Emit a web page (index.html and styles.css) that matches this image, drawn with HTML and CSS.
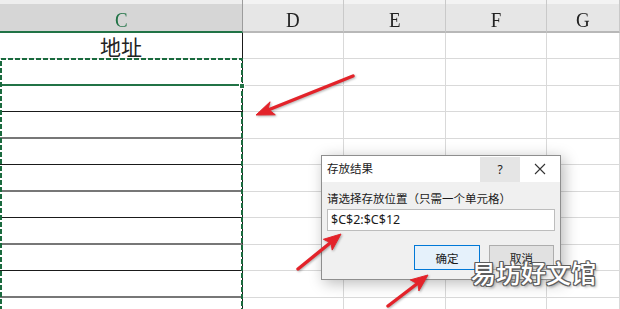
FILE: index.html
```html
<!DOCTYPE html>
<html lang="zh-CN">
<head>
  <meta charset="UTF-8">
  <title>存放结果</title>
  <link rel="stylesheet" href="styles.css">
</head>
<body>
  <div class="page">
    <!-- SHEET -->
    <div class="sheet">
      <div class="hd hd-c"><span>C</span></div>
      <div class="hd"><span>D</span></div>
      <div class="hd"><span>E</span></div>
      <div class="hd"><span>F</span></div>
      <div class="hd"><span>G</span></div>

      <div class="cell c c-title">地址</div><div class="cell"></div><div class="cell"></div><div class="cell"></div><div class="cell"></div>
      <div class="cell c c-active"></div><div class="cell"></div><div class="cell"></div><div class="cell"></div><div class="cell"></div>
      <div class="cell c c-thin"></div><div class="cell"></div><div class="cell"></div><div class="cell"></div><div class="cell"></div>
      <div class="cell c c-thick"></div><div class="cell"></div><div class="cell"></div><div class="cell"></div><div class="cell"></div>
      <div class="cell c c-thin"></div><div class="cell"></div><div class="cell"></div><div class="cell"></div><div class="cell"></div>
      <div class="cell c c-thick"></div><div class="cell"></div><div class="cell"></div><div class="cell"></div><div class="cell"></div>
      <div class="cell c c-thin"></div><div class="cell"></div><div class="cell"></div><div class="cell"></div><div class="cell"></div>
      <div class="cell c c-thick"></div><div class="cell"></div><div class="cell"></div><div class="cell"></div><div class="cell"></div>
      <div class="cell c c-thin"></div><div class="cell"></div><div class="cell"></div><div class="cell"></div><div class="cell"></div>
      <div class="cell c c-thick"></div><div class="cell"></div><div class="cell"></div><div class="cell"></div><div class="cell"></div>
      <div class="cell c"></div><div class="cell"></div><div class="cell"></div><div class="cell"></div><div class="cell"></div>
    </div>

    <!-- SELECTION (marching ants + fill handle) -->
    <svg class="selection" width="620" height="309" viewBox="0 0 620 309">
      <rect x="1" y="59" width="241" height="270" fill="none" stroke="#1a6a3e" stroke-width="2" stroke-dasharray="5 2"/>
      <rect x="239.5" y="83.5" width="5" height="5" fill="#217346" stroke="#fff" stroke-width="1"/>
    </svg>

    <!-- DIALOG -->
    <div class="dialog">
      <div class="dlg-title">
        <span class="dlg-name">存放结果</span>
        <span class="dlg-btn dlg-help">?</span>
        <span class="dlg-btn dlg-close">
          <svg width="12" height="12" viewBox="0 0 12 12"><path d="M1 1L11 11M11 1L1 11" stroke="#333" stroke-width="1.1"/></svg>
        </span>
      </div>
      <div class="dlg-body">
        <div class="dlg-label">请选择存放位置（只需一个单元格）</div>
        <div class="dlg-input">$C$2:$C$12</div>
        <div class="dlg-actions">
          <button class="btn btn-ok">确定</button>
          <button class="btn">取消</button>
        </div>
      </div>
    </div>

    <!-- ARROWS -->
    <svg class="arrows" width="620" height="309" viewBox="0 0 620 309">
      <g fill="#e3232a" stroke="#e3232a">
        <line x1="353" y1="76" x2="263" y2="112" stroke-width="3.4" stroke-linecap="round"/>
        <polygon points="256,115 275.3,114.8 268,109 270.1,101.8" stroke-width="1"/>
        <line x1="298" y1="269" x2="335" y2="239" stroke-width="3.4" stroke-linecap="round"/>
        <polygon points="341,234 332.2,250.1 331,243 323.4,239.3" stroke-width="1"/>
        <line x1="388" y1="306" x2="422" y2="280" stroke-width="3.4" stroke-linecap="round"/>
        <polygon points="428,275 418.9,290.9 418,284 410.3,279.9" stroke-width="1"/>
      </g>
    </svg>

    <div class="watermark">易坊好文馆</div>
  </div>
</body>
</html>
```

FILE: styles.css
```css
* {
  margin: 0;
  padding: 0;
  box-sizing: border-box;
}

body {
  background: #fff;
  overflow: hidden;
}

.page {
  position: relative;
  width: 620px;
  height: 309px;
  overflow: hidden;
}

/* SHEET */
.sheet {
  display: grid;
  grid-template-columns: 243px 101px 102px 101px 73px;
  grid-template-rows: 33px 26px 27px 26px 27px 26px 27px 26px 27px 26px 27px 27px;
}

.hd {
  background: linear-gradient(#f3f3f3 0 4px, #e6e6e6 4px);
  border-right: 1px solid #c9c9c9;
  border-bottom: 2px solid #b8b8b8;
  text-align: center;
  padding-top: 8px;
  line-height: 23px;
  font-family: 'Liberation Serif', serif;
  font-size: 22px;
  color: #222;
}

.hd span {
  display: inline-block;
  transform: scaleX(0.86);
}

.hd-c {
  background: linear-gradient(#eeeeee 0 4px, #d6d6d6 4px);
  border-right-color: #9c9c9c;
  border-bottom-color: #217346;
  color: #217346;
}

.cell {
  border-right: 1px solid #d9d9d9;
  border-bottom: 1px solid #d9d9d9;
}

.c {
  border-right-color: #1a1a1a;
}

.c-title {
  text-align: center;
  font-family: 'Noto Sans CJK SC', sans-serif;
  font-size: 21px;
  line-height: 26px;
  color: #222;
}

.c-active {
  border-bottom: 2px solid #217346;
}

.c-thin {
  border-bottom: 1px solid #1a1a1a;
}

.c-thick {
  border-bottom: 2px solid #777;
}

.selection,
.arrows {
  position: absolute;
  top: 0;
  left: 0;
}

.arrows {
  filter: drop-shadow(1px 1px 1px rgba(0, 0, 0, 0.3));
}

/* DIALOG */
.dialog {
  position: absolute;
  left: 321px;
  top: 155px;
  width: 240px;
  border: 1px solid #8e8e8e;
  background: #f0f0f0;
  box-shadow: 3px 3px 14px rgba(0, 0, 0, 0.28);
  font-family: 'Noto Sans', 'Noto Sans CJK SC', sans-serif;
  font-size: 11.5px;
  color: #1a1a1a;
}

.dlg-title {
  display: flex;
  align-items: stretch;
  height: 26px;
  background: #fff;
}

.dlg-name {
  flex: 1;
  padding-left: 5px;
  line-height: 26px;
}

.dlg-btn {
  width: 40px;
  display: flex;
  align-items: center;
  justify-content: center;
}

.dlg-help {
  background: #e5e5e5;
  margin-top: 1px;
  font-size: 12px;
}

.dlg-body {
  padding: 9px 5px 9px 5px;
}

.dlg-label {
  line-height: 16px;
}

.dlg-input {
  margin-top: 2px;
  height: 22px;
  background: #fff;
  border: 1px solid #bdbdbd;
  padding-left: 3px;
  line-height: 20px;
  font-size: 12.5px;
}

.dlg-actions {
  display: flex;
  justify-content: flex-end;
  gap: 9px;
  margin-top: 14px;
  padding-right: 1px;
}

.btn {
  width: 65px;
  height: 25px;
  background: #e1e1e1;
  border: 1px solid #adadad;
  font-family: inherit;
  font-size: 11.5px;
  color: #1a1a1a;
}

.btn-ok {
  width: 66px;
  background: #e5f1fb;
  border-color: #0078d7;
}

/* WATERMARK */
.watermark {
  position: absolute;
  left: 471px;
  top: 256px;
  font-family: 'Noto Sans CJK SC', sans-serif;
  font-size: 25px;
  font-weight: 500;
  line-height: 32px;
  color: #fff;
  text-shadow:
    -1px -1px 0 #5e5e5e, 1px -1px 0 #5e5e5e, -1px 1px 0 #5e5e5e, 1px 1px 0 #5e5e5e,
    0 -1px 0 #5e5e5e, 0 1px 0 #5e5e5e, -1px 0 0 #5e5e5e, 1px 0 0 #5e5e5e,
    2px 2px 3px rgba(0, 0, 0, 0.35);
}
```
